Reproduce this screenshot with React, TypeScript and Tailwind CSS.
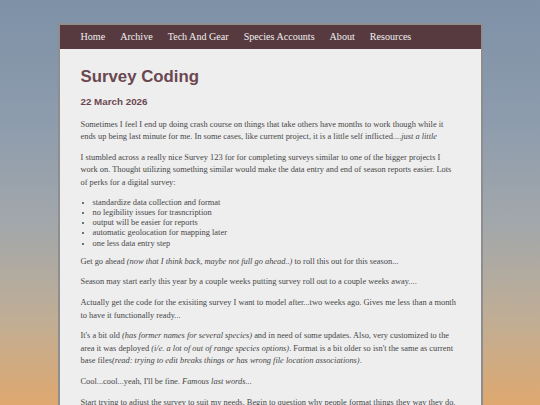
import React from 'react';

const navItems = ['Home', 'Archive', 'Tech And Gear', 'Species Accounts', 'About', 'Resources'];

const perks = [
  'standardize data collection and format',
  'no legibility issues for trasncription',
  'output will be easier for reports',
  'automatic geolocation for mapping later',
  'one less data entry step',
];

const P: React.FC<{ children: React.ReactNode }> = ({ children }) => (
  <p className="mb-[8.4px] leading-[12.4px]">{children}</p>
);

const App: React.FC = () => {
  return (
    <div className="h-[405px] overflow-hidden bg-[linear-gradient(180deg,#7e91a7_0%,#8d9cad_30%,#a2a7ab_55%,#bfae96_78%,#dea86f_100%)] pt-[23px]">
      <div className="mx-auto w-[425px] border-2 border-[#8e8e8e] bg-[#eeeeee]">
        {/* Nav */}
        <nav className="flex h-[24px] items-center gap-[15px] bg-[#573a40] pl-[21px] font-['Liberation_Serif',serif] text-[10.1px] text-[#f2eeee]">
          {navItems.map((item) => (
            <a key={item} href="#" className="whitespace-nowrap">
              {item}
            </a>
          ))}
        </nav>

        <main className="px-[21px] pt-[18px] font-['Liberation_Serif',serif] text-[8.4px] text-[#474747]">
          <h1 className="font-['Liberation_Sans',Arial,sans-serif] text-[16.8px] font-bold leading-[19px] text-[#6b4750]">
            Survey Coding
          </h1>
          <h3 className="mt-[10px] mb-[11.3px] font-['Liberation_Sans',Arial,sans-serif] text-[9.8px] font-bold leading-[11.5px] text-[#6b4750]">
            22 March 2026
          </h3>

          <P>
            Sometimes I feel I end up doing crash course on things that take others have months to work though while it
            ends up being last minute for me. In some cases, like current project, it is a little self inflicted....
            <em>just a little</em>
          </P>
          <P>
            I stumbled across a really nice Survey 123 for for completing surveys similar to one of the bigger projects I
            work on. Thought utilizing something similar would make the data entry and end of season reports easier. Lots
            of perks for a digital survey:
          </P>
          <ul className="mt-[6.7px] mb-[6.7px] list-disc pl-[12px] leading-[10.25px]">
            {perks.map((p) => (
              <li key={p}>{p}</li>
            ))}
          </ul>
          <P>
            Get go ahead <em>(now that I think back, maybe not full go ahead..)</em> to roll this out for this season...
          </P>
          <P>Season may start early this year by a couple weeks putting survey roll out to a couple weeks away....</P>
          <P>
            Actually get the code for the exisiting survey I want to model after...two weeks ago. Gives me less than a
            month to have it functionally ready...
          </P>
          <P>
            It's a bit old <em>(has former names for several species)</em> and in need of some updates. Also, very
            customized to the area it was deployed <em>(i/e. a lot of out of range species options)</em>. Format is a bit
            older so isn't the same as current base files
            <em>(read: trying to edit breaks things or has wrong file location associations)</em>.
          </P>
          <P>
            Cool...cool...yeah, I'll be fine. <em>Famous last words...</em>
          </P>
          <P>
            Start trying to adjust the survey to suit my needs. Begin to question why people format things they way they
            do. Spend hours reading documentation and forum posts trying to figure out what went wrong.
          </P>
        </main>
      </div>
    </div>
  );
};

export default App;
